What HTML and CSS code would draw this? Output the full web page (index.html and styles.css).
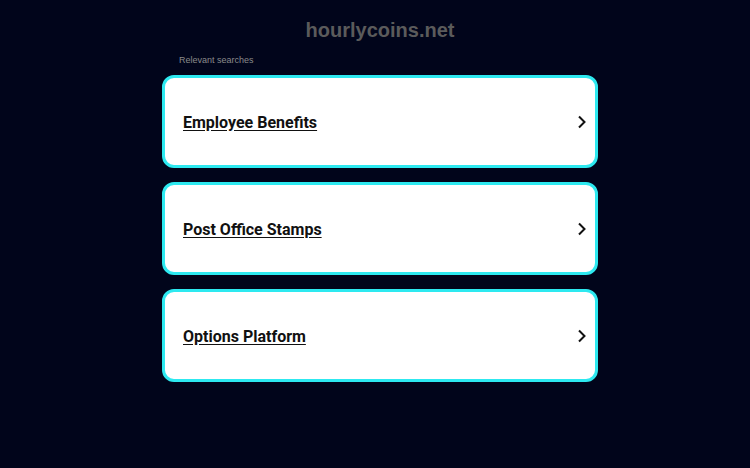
FILE: index.html
```html
<!DOCTYPE html>
<html>
<head>
<meta charset="utf-8">
<link rel="stylesheet" href="styles.css">
</head>
<body>
<div class="page">
  <h1 class="domain">hourlycoins.net</h1>
  <div class="label">Relevant searches</div>
  <div class="list">
    <a class="card" href="#"><span class="text">Employee Benefits</span><svg class="chev" width="10" height="14" viewBox="0 0 10 14"><path d="M2 1.5 L7.5 7 L2 12.5" fill="none" stroke="#111" stroke-width="2"/></svg></a>
    <a class="card" href="#"><span class="text">Post Office Stamps</span><svg class="chev" width="10" height="14" viewBox="0 0 10 14"><path d="M2 1.5 L7.5 7 L2 12.5" fill="none" stroke="#111" stroke-width="2"/></svg></a>
    <a class="card" href="#"><span class="text">Options Platform</span><svg class="chev" width="10" height="14" viewBox="0 0 10 14"><path d="M2 1.5 L7.5 7 L2 12.5" fill="none" stroke="#111" stroke-width="2"/></svg></a>
  </div>
</div>
</body>
</html>
```
FILE: styles.css
```css
html, body {
  margin: 0;
  padding: 0;
  background: #01051b;
  font-family: "Liberation Sans", Arial, sans-serif;
}
.page {
  width: 436px;
  margin: 0 auto;
  padding: 18px 0 0 10px;
}
.domain {
  margin: 0;
  text-align: center;
  font-size: 20px;
  font-weight: bold;
  color: #5b5b5b;
  line-height: 24px;
}
.label {
  margin: 12px 0 0 17px;
  font-size: 9px;
  line-height: 12px;
  color: #8a8a8a;
}
.list {
  margin-top: 9px;
  display: flex;
  flex-direction: column;
  gap: 14px;
}
.card {
  box-sizing: border-box;
  height: 93px;
  border: 3px solid #2de9f0;
  border-radius: 12px;
  background: #fff;
  display: flex;
  align-items: center;
  justify-content: space-between;
  padding: 2px 8px 0 18px;
  text-decoration: none;
}
.text {
  font-family: Roboto, "Liberation Sans", sans-serif;
  font-size: 16px;
  font-weight: bold;
  color: #111;
  text-decoration: underline;
  text-underline-offset: 2px;
}
.chev {
  display: block;
  margin-top: -2px;
}
```
